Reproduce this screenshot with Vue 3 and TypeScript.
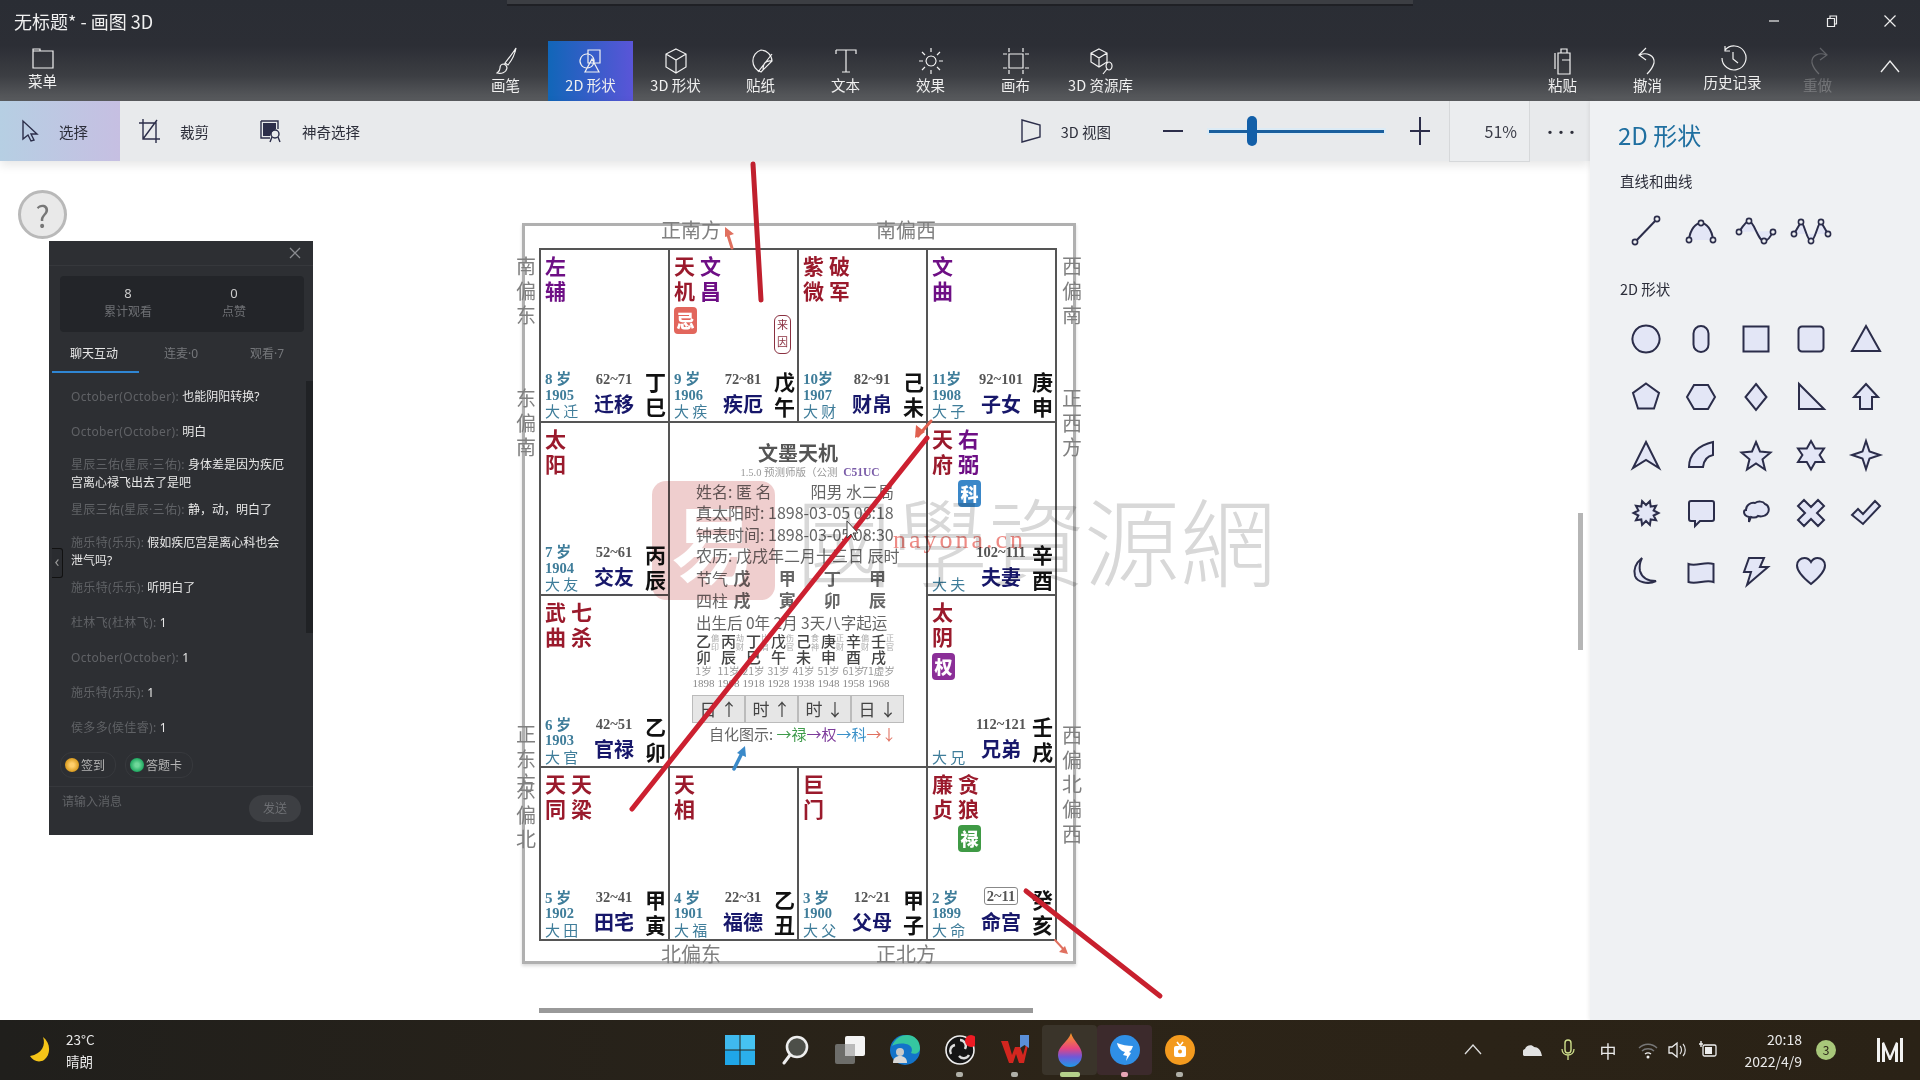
<template>
  <div class="app">
    <!-- TITLE + RIBBON -->
    <header class="topbar">
      <div class="top-strip"></div>
      <div class="title-row">
        <span class="win-title">无标题* - 画图 3D</span>
        <div class="win-controls">
          <svg width="14" height="14" viewBox="0 0 14 14"><path d="M2 7h10" /></svg>
          <svg width="14" height="14" viewBox="0 0 14 14"><path d="M2.5 4.5h7v8h-7zM5 4.5V2h6.5v8H9.5" /></svg>
          <svg width="14" height="14" viewBox="0 0 14 14"><path d="M1.5 1.5l11 11M12.5 1.5l-11 11" /></svg>
        </div>
      </div>
      <div class="ribbon">
        <button class="rib-item menu-btn">
          <svg class="rib-icon" viewBox="0 0 28 28"><path d="M4 7h20v17H4zM4 7V5h7v2" /></svg>
          <span>菜单</span>
        </button>
        <div class="rib-tabs">
          <button v-for="t in tabs" :key="t.label" class="rib-item" :class="{ active: t.label === '2D 形状' }">
            <svg class="rib-icon" viewBox="0 0 28 28"><path :d="t.d" /></svg>
            <span>{{ t.label }}</span>
          </button>
        </div>
        <div class="rib-right">
          <button v-for="t in actions" :key="t.label" class="rib-item" :class="{ dim: t.dim, high: t.high }">
            <svg class="rib-icon" viewBox="0 0 28 28"><path :d="t.d" /></svg>
            <span>{{ t.label }}</span>
          </button>
          <button class="rib-chevron">
            <svg width="22" height="22" viewBox="0 0 22 22"><path d="M2 17L11 6l9 11" /></svg>
          </button>
        </div>
      </div>
    </header>

    <div class="main">
      <div class="work">
        <!-- SUB TOOLBAR -->
        <div class="subbar">
          <button class="sub-btn selected">
            <svg width="20" height="26" viewBox="0 0 20 26"><path d="M4 3v18l5-4 3 6 3-1-3-6h6z" /></svg>
            <span>选择</span>
          </button>
          <button class="sub-btn crop">
            <svg width="24" height="26" viewBox="0 0 24 26"><path d="M5 1v20h17M1 5h17v20M19 2L5 21" /></svg>
            <span>裁剪</span>
          </button>
          <button class="sub-btn magic">
            <svg width="24" height="24" viewBox="0 0 24 24"><path d="M2 2h17v8M2 2v17h9" /><path class="solid" d="M4 4h13v6l-4 3-2 4H4z" /><circle cx="16" cy="15" r="4" /><path d="M13 18l-2 5M19 18l2 5" /></svg>
            <span>神奇选择</span>
          </button>
          <div class="sub-spacer"></div>
          <button class="sub-btn view3d">
            <svg width="22" height="26" viewBox="0 0 22 26"><path d="M2 2l18 5v12L2 24z" /></svg>
            <span>3D 视图</span>
          </button>
          <span class="zoom-sign minus"></span>
          <div class="slider"><span class="slider-thumb"></span></div>
          <span class="zoom-sign plus"></span>
          <div class="zoom-box">51%</div>
          <span class="more">···</span>
        </div>

        <!-- CANVAS -->
        <div class="canvas">
          <button class="help">?</button>

          <div class="chart">
            <span v-for="l in sideLabels" :key="l.text + l.cls" class="side" :class="l.cls">{{ l.text }}</span>
            <div class="grid">
              <template v-for="(c, i) in cells" :key="i">
                <div v-if="c.center" class="center">
                  <h1>文墨天机</h1>
                  <p class="version">1.5.0 预测师版（公测 <b>C51UC</b></p>
                  <div class="info"><span>姓名: 匿 名</span><span class="gender">阳男 水二局</span></div>
                  <div class="info">真太阳时: 1898-03-05 08:18</div>
                  <div class="info">钟表时间: 1898-03-05 08:30</div>
                  <div class="info">农历: 戊戌年二月十三日 辰时</div>
                  <div class="pillars"><span>节气</span><b>戊</b><b>甲</b><b>丁</b><b>甲</b></div>
                  <div class="pillars"><span>四柱</span><b>戌</b><b>寅</b><b>卯</b><b>辰</b></div>
                  <div class="luck-title">出生后 0年 2月 3天八字起运</div>
                  <div class="luck">
                    <div v-for="l in luck" :key="l.year" class="luck-col">
                      <div class="luck-main">
                        <span class="gz">{{ l.gz }}</span>
                        <span class="god">{{ l.god }}</span>
                      </div>
                      <span class="luck-age">{{ l.age }}</span>
                      <span class="luck-year">{{ l.year }}</span>
                    </div>
                  </div>
                  <div class="shift">
                    <button>日 ↑</button><button>时 ↑</button><button>时 ↓</button><button>日 ↓</button>
                  </div>
                  <div class="legend">
                    自化图示: <i class="lg-green">→禄</i><i class="lg-violet">→权</i><i class="lg-blue">→科</i><i class="lg-red">→↓</i>
                  </div>
                </div>
                <div v-else class="cell">
                  <div class="stars">
                    <div v-for="s in c.stars" :key="s.text" class="star-col" :class="s.tone">
                      <span>{{ s.text }}</span>
                      <b v-if="s.badge" class="badge" :class="s.badgeTone">{{ s.badge }}</b>
                    </div>
                  </div>
                  <span v-if="c.tag" class="tag">{{ c.tag }}</span>
                  <div class="foot">
                    <div class="foot-left">
                      <span v-if="c.age" class="age">{{ c.age }}</span>
                      <span v-if="c.year" class="year">{{ c.year }}</span>
                      <span class="da">{{ c.da }}</span>
                    </div>
                    <div class="foot-mid">
                      <span class="range" :class="{ boxed: c.boxed }">{{ c.range }}</span>
                      <span class="palace">{{ c.palace }}</span>
                    </div>
                    <div class="foot-right">{{ c.gz }}</div>
                  </div>
                </div>
              </template>
            </div>
          </div>

          <!-- WATERMARK -->
          <div class="seal"><span>易</span></div>
          <div class="wm-text">國學資源網</div>
          <div class="wm-url">nayona.cn</div>

          <div class="hbar"></div>
          <div class="vbar"></div>

          <!-- LIVE CHAT PANEL -->
          <aside class="chat">
            <div class="chat-head">
              <svg width="12" height="12" viewBox="0 0 12 12"><path d="M1 1l10 10M11 1L1 11" /></svg>
            </div>
            <div class="stats">
              <div><b>8</b><span>累计观看</span></div>
              <div><b>0</b><span>点赞</span></div>
            </div>
            <div class="chat-tabs">
              <span class="on">聊天互动</span><span>连麦·0</span><span>观看·7</span>
            </div>
            <div class="msgs">
              <p v-for="(m, i) in messages" :key="i" :class="{ long: m.long }">
                <span class="who">{{ m.who }}:</span> <span class="say">{{ m.text }}</span>
              </p>
            </div>
            <div class="chips">
              <span class="chip"><i class="coin"></i>签到</span>
              <span class="chip"><i class="coin green"></i>答题卡</span>
            </div>
            <div class="chat-input">
              <span>请输入消息</span>
              <button>发送</button>
            </div>
            <div class="collapse">‹</div>
          </aside>
        </div>
      </div>

      <!-- SHAPES PANEL -->
      <aside class="panel">
        <h2>2D 形状</h2>
        <h3>直线和曲线</h3>
        <div class="shape-grid lines">
          <svg v-for="(l, i) in lineShapes" :key="i" width="32" height="32" viewBox="0 0 32 32">
            <path :d="l.d" fill="none" />
            <circle v-for="(p, j) in l.dots" :key="j" :cx="p[0]" :cy="p[1]" r="2.6" />
          </svg>
        </div>
        <h3 class="second">2D 形状</h3>
        <div class="shape-grid">
          <svg v-for="(d, i) in shapes" :key="i" width="32" height="32" viewBox="0 0 32 32"><path :d="d" /></svg>
        </div>
      </aside>
    </div>

    <!-- TASKBAR -->
    <footer class="taskbar">
      <div class="weather">
        <svg width="28" height="30" viewBox="0 0 28 30"><path fill="#f5c518" d="M17 2c3 8-1 17-13 19 3 5 9 7 14 4 7-5 7-17-1-23z" /></svg>
        <div><span>23°C</span><span>晴朗</span></div>
      </div>
      <div class="apps">
        <div class="app-item">
          <svg width="30" height="30" viewBox="0 0 30 30"><rect x="0" y="0" width="14.5" height="14.5" fill="#3fb9ee" /><rect x="15.5" y="0" width="14.5" height="14.5" fill="#46c3f2" /><rect x="0" y="15.5" width="14.5" height="14.5" fill="#1fa6e8" /><rect x="15.5" y="15.5" width="14.5" height="14.5" fill="#2bb0ec" /></svg>
        </div>
        <div class="app-item">
          <svg width="30" height="30" viewBox="0 0 30 30"><circle cx="17" cy="12" r="10" fill="#4d4f49" stroke="#eee" stroke-width="2.6" /><path d="M10 20l-6 8" stroke="#eee" stroke-width="3" stroke-linecap="round" /></svg>
        </div>
        <div class="app-item">
          <svg width="30" height="30" viewBox="0 0 30 30"><rect x="10" y="1" width="20" height="20" rx="2" fill="#f4f4f4" /><rect x="0" y="9" width="20" height="20" rx="2" fill="#6d6d6a" /><rect x="10" y="9" width="10" height="12" fill="#bbb" /></svg>
        </div>
        <div class="app-item">
          <svg width="30" height="30" viewBox="0 0 30 30"><circle cx="15" cy="15" r="15" fill="#1373c9" /><path fill="#35c6a0" d="M2 11C5 3 12 0 17 0c8 0 13 6 13 13 0 5-5 7-9 5 2-3 1-8-5-9-6-1-11 0-14 2z" /><circle cx="10" cy="17" r="4" fill="#c9c9c9" /><path fill="#d7d7d7" d="M3 28c0-5 3-7 7-7s7 2 7 7z" /></svg>
        </div>
        <div class="app-item dot">
          <svg width="30" height="30" viewBox="0 0 30 30"><circle cx="15" cy="15" r="14" fill="#151515" stroke="#eee" stroke-width="1.6" /><path d="M15 5a6 6 0 0 1 5 9M24 20a6 6 0 0 1-10 1M6 19a6 6 0 0 1 4-9" fill="none" stroke="#ddd" stroke-width="2.4" /><circle cx="26" cy="6" r="6" fill="#ee1b24" /></svg>
        </div>
        <div class="app-item dot">
          <svg width="30" height="30" viewBox="0 0 30 30"><path fill="#d3261f" d="M1 6h7l4 14 3-8h5l3 8 4-14h2l-5 22h-5l-3-9-3 9H9z" /><path fill="#5a8fd8" d="M20 0h9v13l-4.500-3-4.500 3z" /></svg>
        </div>
        <div class="app-item dot wide on-a">
          <svg width="30" height="34" viewBox="0 0 30 34"><defs><linearGradient id="paintDrop" x1="0" y1="0" x2="0" y2="1"><stop offset="0" stop-color="#f59c1f" /><stop offset=".45" stop-color="#e8457f" /><stop offset=".7" stop-color="#6f58d8" /><stop offset="1" stop-color="#1d9be8" /></linearGradient></defs><path fill="url(#paintDrop)" d="M16 0c2 8 11 13 11 22a12 12 0 0 1-24 0C3 13 13 9 16 0z" /></svg>
        </div>
        <div class="app-item dot pink on-b">
          <svg width="30" height="30" viewBox="0 0 30 30"><circle cx="15" cy="15" r="15" fill="#2f8fe6" /><path fill="#fff" d="M7 8c5 2 10 3 16 3-1 3-2 5-4 6l2 1-5 8 1-5-4-1 2-3c-4-1-7-4-8-9z" /></svg>
        </div>
        <div class="app-item dot">
          <svg width="30" height="30" viewBox="0 0 30 30"><circle cx="15" cy="15" r="15" fill="#f39a1e" /><rect x="9" y="11" width="12" height="11" rx="2" fill="#fff" /><path d="M12 7l3 4 3-4" stroke="#fff" stroke-width="1.6" fill="none" /><circle cx="15" cy="16.500" r="2" fill="#f39a1e" /></svg>
        </div>
      </div>
      <div class="tray">
        <svg class="t-chevron" width="20" height="20" viewBox="0 0 20 20"><path d="M2 14l8-9 8 9" fill="none" stroke="#ddd" stroke-width="1.3" /></svg>
        <svg class="t-cloud" width="20" height="20" viewBox="0 0 20 20"><path fill="#e2e2e2" d="M1 16a4 4 0 0 1 1-7c1-4 7-5 9-2 4 0 7 3 8 9z" /></svg>
        <svg class="t-mic" width="20" height="24" viewBox="0 0 20 24"><rect x="7" y="2" width="6" height="13" rx="3" fill="none" stroke="#cfe08c" stroke-width="1.4" /><path d="M4 11c0 4 3 6 6 6s6-2 6-6M10 17v5" fill="none" stroke="#cfe08c" stroke-width="1.3" /></svg>
        <span class="t-zh">中</span>
        <svg class="t-wifi" width="20" height="20" viewBox="0 0 20 20"><path d="M1 8c5-5 13-5 18 0M4 11c3-3 9-3 12 0" fill="none" stroke="#777" stroke-width="1.4" /><path d="M7 14c2-1.500 4-1.500 6 0" fill="none" stroke="#eee" stroke-width="1.4" /><circle cx="10" cy="17" r="1.500" fill="#eee" /></svg>
        <svg class="t-vol" width="20" height="20" viewBox="0 0 20 20"><path d="M2 7h3l5-4v14l-5-4H2z" fill="none" stroke="#eee" stroke-width="1.3" /><path d="M13 6c2 2 2 6 0 8M16 4c3 3 3 9 0 12" fill="none" stroke="#ddd" stroke-width="1.2" /></svg>
        <svg class="t-batt" width="20" height="20" viewBox="0 0 20 20"><rect x="5" y="5" width="13" height="11" rx="1.500" fill="none" stroke="#eee" stroke-width="1.3" /><rect x="7" y="7" width="7" height="7" fill="#eee" /><path d="M3 1v6M1 4h4" stroke="#eee" stroke-width="1.4" /></svg>
        <div class="clock"><span>20:18</span><span>2022/4/9</span></div>
        <span class="notif">3</span>
        <svg class="t-logo" width="30" height="30" viewBox="0 0 30 30"><path fill="#f2f2f2" d="M2 3h3v24H2zM7 8l2-1 6 14 6-14 2 1v19h-3V15l-4 10h-2L10 15v12H7zM25 3h3v24h-3z" /></svg>
      </div>
    </footer>

    <!-- HAND-DRAWN MARKS -->
    <svg class="marks" width="1920" height="1080" viewBox="0 0 1920 1080">
      <g fill="none" stroke-linecap="round">
        <path d="M753 164L761 300" stroke="#c0202e" stroke-width="5" />
        <path d="M632 809L927 438" stroke="#cc2030" stroke-width="5" />
        <path d="M1026 891L1160 996" stroke="#c8202e" stroke-width="5" />
        <path d="M732 248L727 232" stroke="#e0705f" stroke-width="3" />
        <path d="M1055 940L1066 952" stroke="#e0705f" stroke-width="2" />
        <path d="M734 769L743 751" stroke="#3b8ac9" stroke-width="3.500" />
        <path d="M918 436L931 421" stroke="#e0604f" stroke-width="3" />
      </g>
      <path fill="#e0705f" d="M725 227l9 7-9 3zM1068 954l-9-2 6-6z" />
      <path fill="#3b8ac9" d="M745 746l1 11-9-4z" />
      <path fill="#e0604f" d="M916 425l-1 13 10-6z" />
      <path fill="#fff" stroke="#444" stroke-width="1" d="M847 521v17l4-4 3 6 2-1-3-6h5z" />
    </svg>
  </div>
</template>

<script setup lang="ts">
interface Star {
  text: string;
  tone: string;
  badge?: string;
  badgeTone?: string;
}

interface Cell {
  center?: boolean;
  stars?: Star[];
  tag?: string;
  age?: string;
  year?: string;
  da?: string;
  range?: string;
  boxed?: boolean;
  palace?: string;
  gz?: string;
}

const tabs = [
  { label: '画笔', d: 'M24 1c-3 5-7 10-11 15l3 2c4-5 7-11 8-17zM12 17c-3 0-4 2-4 4 0 3-2 4-3 5 4 1 9 0 10-5 0-2-1-3-3-4z' },
  { label: '2D 形状', d: 'M10 7a7 7 0 1 0 .1 0zM11 3h12v13H11zM15 12l7 13H8z' },
  { label: '3D 形状', d: 'M14 2l10 5v13l-10 6-10-6V7zM4 7l10 6 10-6M14 13v13' },
  { label: '贴纸', d: 'M14 3a11.500 11.500 0 0 1 11 11L14 25A11.500 11.500 0 0 1 14 3zM25 7L11 25M25 14c-6-1-9 2-9 9' },
  { label: '文本', d: 'M4 3h20v4M4 3v4M14 3v22M10 25h8' },
  { label: '效果', d: 'M14 9a5 5 0 1 0 .1 0zM14 1v4M14 23v4M2 14h4M22 14h4M5 5l3 3M20 20l3 3M23 5l-3 3M8 20l-3 3' },
  { label: '画布', d: 'M7 7h14v14H7zM7 1v4M21 1v4M7 23v4M21 23v4M1 7h4M1 21h4M23 7h4M23 21h4' },
  { label: '3D 资源库', d: 'M12 2l8 4v9l-8 5-8-5V6zM4 6l8 5 8-5M12 11v9M22 15a3 4 0 1 0 .1 0zM20 22l-4 5' },
];

const actions = [
  { label: '粘贴', d: 'M9 6h12v21H9zM12 6V2h6v4M6 6v16M13 13h8' },
  { label: '撤消', d: 'M6 8c6-3 15 0 14 8-1 4-4 8-7 11M12 1L5 8l7 5' },
  { label: '历史记录', d: 'M6 5a12 12 0 1 1-3 8M6 1v5h5M14 7v7l5 4', high: true },
  { label: '重做', d: 'M22 8c-6-3-15 0-14 8 1 4 4 8 7 11M16 1l7 7-7 5', dim: true },
];

const red = 'red';
const vio = 'vio';

const cells: Cell[] = [
  { stars: [{ text: '左辅', tone: vio }], age: '8 岁', year: '1905', da: '大 迁', range: '62~71', palace: '迁移', gz: '丁巳' },
  {
    stars: [{ text: '天机', tone: red, badge: '忌', badgeTone: 'ji' }, { text: '文昌', tone: vio }],
    tag: '来因', age: '9 岁', year: '1906', da: '大 疾', range: '72~81', palace: '疾厄', gz: '戊午',
  },
  { stars: [{ text: '紫微', tone: red }, { text: '破军', tone: red }], age: '10岁', year: '1907', da: '大 财', range: '82~91', palace: '财帛', gz: '己未' },
  { stars: [{ text: '文曲', tone: vio }], age: '11岁', year: '1908', da: '大 子', range: '92~101', palace: '子女', gz: '庚申' },
  { stars: [{ text: '太阳', tone: red }], age: '7 岁', year: '1904', da: '大 友', range: '52~61', palace: '交友', gz: '丙辰' },
  { center: true },
  {
    stars: [{ text: '天府', tone: red }, { text: '右弼', tone: vio, badge: '科', badgeTone: 'ke' }],
    da: '大 夫', range: '102~111', palace: '夫妻', gz: '辛酉',
  },
  { stars: [{ text: '武曲', tone: red }, { text: '七杀', tone: red }], age: '6 岁', year: '1903', da: '大 官', range: '42~51', palace: '官禄', gz: '乙卯' },
  {
    stars: [{ text: '太阴', tone: red, badge: '权', badgeTone: 'quan' }],
    da: '大 兄', range: '112~121', palace: '兄弟', gz: '壬戌',
  },
  { stars: [{ text: '天同', tone: red }, { text: '天梁', tone: red }], age: '5 岁', year: '1902', da: '大 田', range: '32~41', palace: '田宅', gz: '甲寅' },
  { stars: [{ text: '天相', tone: red }], age: '4 岁', year: '1901', da: '大 福', range: '22~31', palace: '福德', gz: '乙丑' },
  { stars: [{ text: '巨门', tone: red }], age: '3 岁', year: '1900', da: '大 父', range: '12~21', palace: '父母', gz: '甲子' },
  {
    stars: [{ text: '廉贞', tone: red }, { text: '贪狼', tone: red, badge: '禄', badgeTone: 'lu' }],
    age: '2 岁', year: '1899', da: '大 命', range: '2~11', boxed: true, palace: '命宫', gz: '癸亥',
  },
];

const luck = [
  { gz: '乙卯', god: '偏印', age: '1岁', year: '1898' },
  { gz: '丙辰', god: '劫财', age: '11岁', year: '1908' },
  { gz: '丁巳', god: '比肩', age: '21岁', year: '1918' },
  { gz: '戊午', god: '伤官', age: '31岁', year: '1928' },
  { gz: '己未', god: '食神', age: '41岁', year: '1938' },
  { gz: '庚申', god: '正财', age: '51岁', year: '1948' },
  { gz: '辛酉', god: '偏财', age: '61岁', year: '1958' },
  { gz: '壬戌', god: '正官', age: '71虚岁', year: '1968' },
];

const sideLabels = [
  { text: '正南方', cls: 'top col-a' },
  { text: '南偏西', cls: 'top col-b' },
  { text: '北偏东', cls: 'bottom col-a' },
  { text: '正北方', cls: 'bottom col-b' },
  { text: '南偏东', cls: 'left r1' },
  { text: '东偏南', cls: 'left r2' },
  { text: '正东方', cls: 'left r3' },
  { text: '东偏北', cls: 'left r4' },
  { text: '西偏南', cls: 'right r1' },
  { text: '正西方', cls: 'right r2' },
  { text: '西偏北', cls: 'right r3' },
  { text: '偏西', cls: 'right r4' },
];

const messages = [
  { who: 'October(October)', text: '也能阴阳转换?' },
  { who: 'October(October)', text: '明白' },
  { who: '星辰三佑(星辰·三佑)', text: '身体差是因为疾厄\n宫离心禄飞出去了是吧', long: true },
  { who: '星辰三佑(星辰·三佑)', text: '静，动，明白了' },
  { who: '施乐特(乐乐)', text: '假如疾厄宫是离心科也会\n泄气吗?', long: true },
  { who: '施乐特(乐乐)', text: '听明白了' },
  { who: '杜林飞(杜林飞)', text: '1' },
  { who: 'October(October)', text: '1' },
  { who: '施乐特(乐乐)', text: '1' },
  { who: '侯多多(侯佳睿)', text: '1' },
];

const lineShapes = [
  { d: 'M5 28L27 5', dots: [[5, 28], [27, 5]] },
  { d: 'M4 26C5 15 11 9 16 9s11 6 12 17', dots: [[4, 26], [16, 9], [28, 26]] },
  { d: 'M-1 18C3 12 6 7 9 7c5 0 9 20 15 20 4 0 7-5 9-10', dots: [[-1, 18], [9, 7], [24, 27], [33, 18]] },
  { d: 'M-1 20L6 8c3 0 6 19 10 19s7-19 10-19l7 12', dots: [[-1, 20], [6, 8], [16, 27], [26, 8], [33, 20]] },
];

// spiky burst used in the 4th shape row
const burst = (() => {
  const pts: string[] = [];
  for (let i = 0; i < 20; i++) {
    const r = i % 2 === 0 ? 12.500 : 8;
    const a = (i / 20) * Math.PI * 2;
    pts.push(`${(16 + r * Math.cos(a)).toFixed(1)} ${(16 + r * Math.sin(a)).toFixed(1)}`);
  }
  return `M${pts.join('L')}z`;
})();

const shapes = [
  'M16 2.500a13.500 13.500 0 1 0 .01 0z',
  'M16 3a7.500 7.500 0 0 1 7.500 7.500v11a7.500 7.500 0 0 1-15 0v-11A7.500 7.500 0 0 1 16 3z',
  'M3.500 3.500h25v25h-25z',
  'M7 3.500h18a3.500 3.500 0 0 1 3.500 3.500v18a3.500 3.500 0 0 1-3.500 3.500H7A3.500 3.500 0 0 1 3.500 25V7A3.500 3.500 0 0 1 7 3.500z',
  'M16 3l14 25H2z',
  'M16 2.500l13 9.500-5 15.500H8L3 12z',
  'M9 4h14l7 12-7 12H9L2 16z',
  'M16 3l10.500 13L16 29 5.500 16z',
  'M4 3v25h25z',
  'M16 3l12 13h-6v12H10V16H4z',
  'M16 3l13 26-13-8-13 8z',
  'M4 28C4 15 14 6 28 3v13c-6 1-9 5-10 12z',
  'M16 3l4 9.500 10.500 1-8 6.800 2.500 10.200L16 24.500 7 30.500l2.500-10.200-8-6.800 10.500-1z',
  'M16 2l4.200 7.500H29l-4.400 6.500 4.400 7h-8.800L16 30.500 11.800 23H3l4.400-7L3 9.500h8.800z',
  'M16 2l3.500 10.500L30 16l-10.500 3.500L16 30l-3.500-10.500L2 16l10.500-3.500z',
  burst,
  'M6 4h21a2 2 0 0 1 2 2v16a2 2 0 0 1-2 2H15l-5 5v-5H6a2 2 0 0 1-2-2V6a2 2 0 0 1 2-2z',
  'M6 13c0-5 5-8 9-7 3-2 8-2 10 1 4 1 5 7 2 10-2 2-6 3-9 2-1 1-4 2-7 1l-2 5v-5c-4-1-5-3-5-5s1-2 2-2z',
  'M9 3l7 7 7-7 6 6-7 7 7 7-6 6-7-7-7 7-6-6 7-7-7-7z',
  'M2 18l6-6 5 5L25 4l5 5L13 27z',
  'M12 3C6 8 3 14 5 21c2 6 13 9 21 5-8 0-14-3-16-10-1-5 0-9 2-13z',
  'M3.500 9c8 3 16-3 25 0v18c-8-3-17 3-25 0z',
  'M9 3h15l-4 9h8L7 30l4-13H4z',
  'M16 29C6 21 2 16 2 10.500 2 6 5.500 3 9.500 3c2.800 0 5 1.500 6.500 4 1.500-2.500 3.700-4 6.500-4C26.500 3 30 6 30 10.500 30 16 26 21 16 29z',
];
</script>

<style>
html, body { margin: 0; background: #fff; overflow: hidden; }
</style>

<style scoped>
.app {
  position: relative;
  width: 1920px;
  height: 1080px;
  display: flex;
  flex-direction: column;
  overflow: hidden;
  font-family: "Noto Sans CJK SC", "Noto Sans", sans-serif;
}
button { font: inherit; border: 0; background: none; padding: 0; color: inherit; }

/* ribbon */
.topbar {
  position: relative;
  height: 101px;
  flex: none;
  color: #f0f0f0;
  background: linear-gradient(#2a2d34 0, #2c2e35 45%, #3c3e43 75%, #5a5c5f 100%);
}
.top-strip {
  position: absolute;
  left: 507px;
  top: 0;
  width: 906px;
  height: 4px;
  background: #3c3e43;
  border-bottom: 2px solid #1f2025;
}
.title-row {
  height: 41px;
  display: flex;
  align-items: center;
  justify-content: space-between;
  padding-left: 14px;
}
.win-title { font-size: 18px; }
.win-controls { display: flex; gap: 44px; padding-right: 23px; }
.win-controls path { fill: none; stroke: #eee; stroke-width: 1.2; }
.ribbon { height: 60px; display: flex; }
.rib-item {
  width: 85px;
  height: 60px;
  display: flex;
  flex-direction: column;
  align-items: center;
  flex: none;
  font-size: 14.5px;
  line-height: 18px;
}
.rib-icon { width: 28px; height: 28px; margin: 6px 0 1px; }
.rib-icon path { fill: none; stroke: #f2f2f2; stroke-width: 1.2; }
.rib-item.active { background: linear-gradient(90deg, #1166b8, #5a55d8); }
.rib-item.high .rib-icon { margin: 4px 0 0; }
.rib-item.dim { opacity: .25; }
.menu-btn .rib-icon { margin-top: 3px; margin-bottom: 0; }
.rib-tabs { display: flex; margin-left: 378px; }
.rib-right { display: flex; margin-left: auto; }
.rib-chevron { width: 60px; height: 50px; display: flex; align-items: center; justify-content: center; }
.rib-chevron path { fill: none; stroke: #eee; stroke-width: 1.4; }

/* body */
.main { flex: 1; display: flex; min-height: 0; }
.work { flex: 1; display: flex; flex-direction: column; min-width: 0; }
.subbar {
  position: relative;
  z-index: 2;
  height: 60px;
  display: flex;
  align-items: center;
  background: #e8eaec;
  color: #2c2e3a;
  font-size: 14.5px;
  box-shadow: 0 4px 10px rgba(0, 0, 0, .1);
}
.sub-btn { display: flex; align-items: center; height: 100%; }
.sub-btn svg { fill: none; stroke: #2c2e4a; stroke-width: 1.4; }
.sub-btn .solid { fill: #2c2e4a; stroke: none; }
.selected {
  width: 120px;
  padding-left: 19px;
  gap: 20px;
  box-sizing: border-box;
  background: linear-gradient(90deg, #b6cfe3, #c6bfe2);
}
.crop { margin-left: 18px; gap: 18px; }
.magic { margin-left: 50px; gap: 19px; }
.sub-spacer { flex: 1; }
.view3d { gap: 19px; margin-right: 52px; }
.zoom-sign { position: relative; width: 20px; height: 20px; }
.zoom-sign::before {
  content: "";
  position: absolute;
  left: 0;
  right: 0;
  top: 9px;
  height: 2px;
  background: #2c2e4a;
}
.plus::after {
  content: "";
  position: absolute;
  left: 9px;
  top: -4px;
  width: 2px;
  height: 28px;
  background: #2c2e4a;
}
.plus { margin-left: 26px; }
.slider {
  position: relative;
  margin-left: 26px;
  width: 175px;
  height: 3px;
  background: #1a5f9e;
  box-shadow: 0 0 0 2px #dcebf5;
}
.slider-thumb {
  position: absolute;
  left: 38px;
  top: -14px;
  width: 10px;
  height: 30px;
  border-radius: 5px;
  background: #125fa8;
}
.zoom-box {
  width: 67px;
  height: 60px;
  margin-left: 19px;
  padding-right: 12px;
  display: flex;
  align-items: center;
  justify-content: flex-end;
  background: #ebedef;
  border: solid #d6d8da;
  border-width: 0 1px 1px;
  font-size: 16px;
  color: #3b3d48;
}
.more { width: 60px; text-align: center; font-size: 13px; font-weight: 700; letter-spacing: -2px; }

.canvas { position: relative; flex: 1; background: #fff; }
.help {
  position: absolute;
  left: 18px;
  top: 29px;
  width: 49px;
  height: 49px;
  box-sizing: border-box;
  border-radius: 50%;
  border: 3px solid #b9b9b9;
  background: #e9e9e9;
  color: #777;
  font-size: 30px;
  line-height: 40px;
}
.hbar { position: absolute; left: 539px; top: 847px; width: 494px; height: 5px; background: #999; }
.vbar { position: absolute; left: 1578px; top: 352px; width: 5px; height: 137px; background: #b5b5b5; }

/* chart */
.chart {
  position: absolute;
  left: 522px;
  top: 62px;
  width: 554px;
  height: 741px;
  box-sizing: border-box;
  padding: 22px 0 0 14px;
  border: 3px solid #b0b0b0;
  box-shadow: 0 2px 3px rgba(0, 0, 0, .15);
  filter: blur(.35px);
  background: #fff;
}
.side {
  position: absolute;
  color: #808080;
  font-size: 20px;
  line-height: 24.5px;
  white-space: nowrap;
}
.side.top { top: -8px; }
.side.bottom { bottom: -5px; }
.top.col-a, .bottom.col-a { left: 136px; }
.top.col-b, .bottom.col-b { left: 351px; }
.side.left, .side.right { width: 20px; white-space: normal; }
.side.left { left: -9px; }
.side.right { left: 537px; }
.r1 { top: 28px; }
.r2 { top: 160px; }
.r3 { top: 496px; }
.r4 { top: 552px; }
.right.r3 { top: 497px; }
.right.r4 { top: 571px; }
.grid {
  width: 518px;
  height: 693px;
  box-sizing: border-box;
  display: grid;
  grid-template-columns: repeat(4, 1fr);
  grid-template-rows: repeat(4, 1fr);
  border: solid #555;
  border-width: 2px 0 0 2px;
  background: #fff;
  position: relative;
}
.cell, .center {
  position: relative;
  min-width: 0;
  min-height: 0;
  border: solid #555;
  border-width: 0 2px 2px 0;
}
.cell { display: flex; flex-direction: column; justify-content: space-between; padding: 3px 2px 2px 4px; }
.stars { display: flex; }
.star-col {
  width: 26px;
  display: flex;
  flex-direction: column;
  font-size: 21px;
  line-height: 25px;
  font-weight: 700;
}
.star-col span { width: 1em; }
.star-col.red { color: #9a1a2c; }
.star-col.vio { color: #6e0f85; }
.badge {
  width: 23px;
  height: 27px;
  margin-top: 4px;
  border-radius: 4px;
  color: #fff;
  font-size: 18px;
  line-height: 27px;
  text-align: center;
}
.ji { background: #e2665c; }
.ke { background: #3a87c8; }
.quan { background: #8b2f98; }
.lu { background: #3f9a45; }
.tag {
  position: absolute;
  right: 6px;
  top: 65px;
  width: 15px;
  height: 37px;
  border: 1px solid #8a3040;
  border-radius: 6px;
  color: #8a3040;
  font-size: 11px;
  line-height: 17px;
  text-align: center;
}
.foot { display: flex; align-items: flex-end; }
.foot-left {
  width: 38px;
  display: flex;
  flex-direction: column;
  color: #3f7d9a;
  font-family: "Liberation Serif", "Noto Sans CJK SC", serif;
  font-size: 14px;
  line-height: 15.5px;
  white-space: nowrap;
}
.age { font-size: 15px; font-weight: 700; }
.year { font-size: 14.500px; font-weight: 700; }
.da { font-size: 15px; font-family: "Noto Sans CJK SC", sans-serif; }
.foot-mid { flex: 1; display: flex; flex-direction: column; align-items: center; }
.range {
  font-family: "Liberation Serif", serif;
  font-size: 14.500px;
  font-weight: 700;
  line-height: 20px;
  color: #555;
}
.boxed { border: 1px solid #888; border-radius: 3px; padding: 0 2px; line-height: 16px; margin-bottom: 2px; }
.palace { font-size: 20px; font-weight: 700; line-height: 30px; color: #17176a; }
.foot-right {
  width: 21px;
  font-size: 21px;
  line-height: 25px;
  font-weight: 700;
  color: #111;
}

/* center block */
.center {
  grid-column: 2 / 4;
  grid-row: 2 / 4;
  padding: 18px 26px 0;
  color: #666;
  display: flex;
  flex-direction: column;
  position: relative;
  z-index: 1;
  background: transparent;
  box-sizing: border-box;
}
.center h1 { margin: 0; text-align: center; font-size: 20px; line-height: 24px; color: #555; font-weight: 700; }
.version {
  margin: 0 0 1px;
  padding-left: 24px;
  text-align: center;
  font: 10.500px/15px "Liberation Serif", "Noto Sans CJK SC", serif;
  color: #999;
  white-space: nowrap;
}
.version b { color: #7a5ca8; margin-left: 3px; font-size: 11.500px; }
.info {
  display: flex;
  justify-content: space-between;
  font-size: 16px;
  line-height: 21.500px;
  white-space: nowrap;
}
.gender { padding-right: 6px; }
.pillars { display: flex; font-size: 16px; line-height: 22px; }
.pillars span { width: 23.500px; white-space: nowrap; }
.pillars b { width: 48px; text-align: center; font-size: 17px; }
.luck-title { font-size: 15.500px; line-height: 22px; white-space: nowrap; }
.luck { display: flex; margin-left: -5px; }
.luck-col { width: 25px; display: flex; flex-direction: column; align-items: center; white-space: nowrap; }
.luck-main { position: relative; width: 15px; }
.gz { display: block; width: 1em; font-size: 15px; line-height: 16px; font-weight: 500; color: #444; white-space: normal; }
.god {
  position: absolute;
  left: 15px;
  top: 0;
  width: 1em;
  font-size: 8px;
  line-height: 9px;
  color: #aaa;
  white-space: normal;
}
.luck-age { font-size: 10.500px; line-height: 12px; color: #999; }
.luck-year { font: 11px/12px "Liberation Serif", serif; color: #888; }
.shift { display: flex; width: 212px; margin: 6px 0 0 -4px; }
.shift button {
  flex: 1;
  height: 28px;
  background: #e6e6e6;
  border: 1px solid #bbb;
  font-size: 17px;
  line-height: 26px;
  color: #444;
}
.legend { font-size: 15px; line-height: 22px; padding-left: 13px; white-space: nowrap; }
.legend i { font-style: normal; }
.lg-green { color: #3e9a4a; }
.lg-violet { color: #7c3a9a; }
.lg-blue { color: #3a90c8; }
.lg-red { color: #e0705f; }

/* watermark */
.seal {
  position: absolute;
  left: 652px;
  top: 320px;
  width: 123px;
  height: 119px;
  border-radius: 14px;
  background: #ecc6c6;
  mix-blend-mode: multiply;
  opacity: .85;
  overflow: hidden;
  display: flex;
  align-items: center;
  justify-content: center;
}
.seal span { color: #fff; font-size: 84px; line-height: 1; font-weight: 700; }
.wm-text {
  position: absolute;
  left: 796px;
  top: 312px;
  font-family: "Noto Sans CJK TC", "Noto Sans CJK SC", sans-serif;
  font-size: 96px;
  line-height: 130px;
  font-weight: 300;
  color: #d8d8d8;
  mix-blend-mode: multiply;
  white-space: nowrap;
}
.wm-url {
  position: absolute;
  left: 893px;
  top: 366px;
  font: 26px/26px "Liberation Serif", serif;
  letter-spacing: 3px;
  color: #ee8a84;
  mix-blend-mode: multiply;
}

/* chat */
.chat {
  position: absolute;
  left: 49px;
  top: 80px;
  width: 264px;
  height: 594px;
  display: flex;
  flex-direction: column;
  background: #2d2f33;
  color: #e8e8e8;
  font-family: "Noto Sans", "Noto Sans CJK SC", sans-serif;
  font-size: 12px;
}
.chat-head {
  height: 24px;
  flex: none;
  display: flex;
  align-items: center;
  justify-content: flex-end;
  padding-right: 12px;
  border-bottom: 1px solid #36383c;
}
.chat-head path { stroke: #8a8c90; stroke-width: 1.3; fill: none; }
.stats {
  margin: 10px 9px 0 11px;
  height: 56px;
  flex: none;
  display: flex;
  border-radius: 4px;
  background: #232529;
}
.stats div { display: flex; flex-direction: column; align-items: center; padding-top: 8px; }
.stats div:first-child { margin-left: 44px; }
.stats div:last-child { margin-left: 70px; }
.stats b { font-weight: 400; font-size: 13px; line-height: 18px; color: #ccc; }
.stats span { font-size: 12px; line-height: 20px; color: #6e7074; }
.chat-tabs {
  position: relative;
  height: 41px;
  flex: none;
  display: flex;
  align-items: center;
  padding-left: 21px;
  color: #75777b;
}
.chat-tabs span:nth-child(2) { margin-left: 46px; }
.chat-tabs span:nth-child(3) { margin-left: 52px; }
.chat-tabs .on { color: #e8e8e8; }
.chat-tabs::after {
  content: "";
  position: absolute;
  left: 3px;
  top: 39px;
  width: 87px;
  height: 2px;
  background: #2f86d4;
}
.msgs {
  position: relative;
  flex: 1;
  padding: 15px 0 0 22px;
  box-sizing: border-box;
  min-height: 0;
}
.msgs::after {
  content: "";
  position: absolute;
  right: 0;
  top: 8px;
  width: 7px;
  height: 252px;
  background: #202225;
}
.msgs p { margin: 0 0 17px; width: 240px; line-height: 18px; }
.msgs p.long { margin-top: -2px; margin-bottom: 9px; }
.who { color: #606266; letter-spacing: .35px; }
.say { white-space: pre-line; }
.chips {
  flex: none;
  height: 32px;
  display: flex;
  gap: 9px;
  padding: 0 0 0 11px;
  align-items: center;
  color: #b5b5b5;
}
.chip {
  display: flex;
  align-items: center;
  gap: 2px;
  height: 24px;
  padding: 0 10px 0 4px;
  border: 1px solid #37393d;
  border-radius: 12px;
}
.coin {
  width: 14px;
  height: 14px;
  border-radius: 50%;
  background: radial-gradient(circle, #ffcf6b 20%, #d89a1e 70%);
}
.coin.green { background: radial-gradient(circle, #6fd89a 20%, #1ea860 70%); }
.chat-input {
  height: 42px;
  flex: none;
  position: relative;
  border-top: 1px solid #36383c;
  padding: 6px 0 0 13px;
  color: #616367;
  line-height: 17px;
  margin-top: 5px;
}
.chat-input button {
  position: absolute;
  left: 200px;
  top: 8px;
  width: 52px;
  height: 27px;
  border-radius: 14px;
  background: #3d3f43;
  color: #6e7074;
  font-size: 12px;
}
.collapse {
  position: absolute;
  left: 3px;
  top: 307px;
  width: 11px;
  height: 30px;
  box-sizing: border-box;
  border: 1px solid #111;
  border-left: 0;
  border-radius: 0 3px 3px 0;
  background: #2a2c30;
  color: #999;
  font-size: 16px;
  line-height: 25px;
  text-align: center;
}

/* shapes panel */
.panel {
  position: relative;
  z-index: 3;
  width: 330px;
  flex: none;
  box-sizing: border-box;
  padding: 15px 0 0 28px;
  background: #eff1f3;
  box-shadow: -1px 0 4px rgba(0, 0, 0, .08);
  color: #2c2e3a;
}
.panel h2 { margin: 0; font-size: 24px; line-height: 38px; font-weight: 400; color: #1f6fa0; }
.panel h3 { margin: 16px 0 0 2px; font-size: 14.500px; line-height: 22px; font-weight: 400; }
.panel h3.second { margin-top: 31px; }
.shape-grid {
  display: grid;
  grid-template-columns: repeat(5, 55px);
  grid-auto-rows: 58px;
  justify-items: center;
  align-items: center;
  margin-top: 10px;
}
.shape-grid.lines { margin-top: 21px; grid-auto-rows: 34px; }
.shape-grid svg { overflow: visible; }
.shape-grid path { fill: #e3e6f6; stroke: #2b2d4a; stroke-width: 2; stroke-linejoin: miter; }
.shape-grid circle { fill: #eff1f3; stroke: #2b2d4a; stroke-width: 1.600; }

/* taskbar */
.taskbar {
  position: relative;
  z-index: 4;
  height: 60px;
  flex: none;
  display: flex;
  align-items: center;
  background: linear-gradient(90deg, #201f1c, #2c2418 55%, #2a2216);
  color: #e9e9e9;
}
.weather { width: 712px; flex: none; display: flex; align-items: center; gap: 12px; padding-left: 26px; box-sizing: border-box; }
.weather div { display: flex; flex-direction: column; font-size: 13.500px; line-height: 22px; }
.apps { display: flex; width: 495px; flex: none; }
.app-item {
  position: relative;
  width: 55px;
  height: 50px;
  display: flex;
  align-items: center;
  justify-content: center;
  border-radius: 4px;
  box-sizing: border-box;
}
.app-item.dot::after {
  content: "";
  position: absolute;
  left: 50%;
  bottom: -2px;
  width: 7px;
  height: 5px;
  margin-left: -3.500px;
  border-radius: 2px;
  background: #b0b0a8;
}
.app-item.wide::after { width: 20px; margin-left: -10px; background: #b5d08a; }
.app-item.pink::after { background: #e8a5b5; }
.on-a { background: #3a342a; }
.on-b { background: #3c2a2c; }
.tray { flex: 1; display: flex; align-items: center; padding-right: 15px; justify-content: flex-end; }
.tray svg, .t-zh { flex: none; }
.t-cloud { margin-left: 40px; }
.t-mic { margin-left: 15px; }
.t-zh { margin-left: 20px; width: 20px; text-align: center; font-size: 17px; }
.t-wifi { margin-left: 20px; }
.t-vol { margin-left: 9px; }
.t-batt { margin-left: 11px; }
.clock {
  width: 70px;
  margin-left: 14px;
  display: flex;
  flex-direction: column;
  align-items: flex-end;
  font-size: 14px;
  line-height: 22px;
}
.notif {
  width: 20px;
  height: 20px;
  margin-left: 14px;
  border-radius: 50%;
  background: #a8c77a;
  color: #2a2216;
  font-size: 12px;
  line-height: 20px;
  text-align: center;
}
.t-logo { margin-left: 39px; }

.marks { position: absolute; left: 0; top: 0; z-index: 5; pointer-events: none; }
</style>
